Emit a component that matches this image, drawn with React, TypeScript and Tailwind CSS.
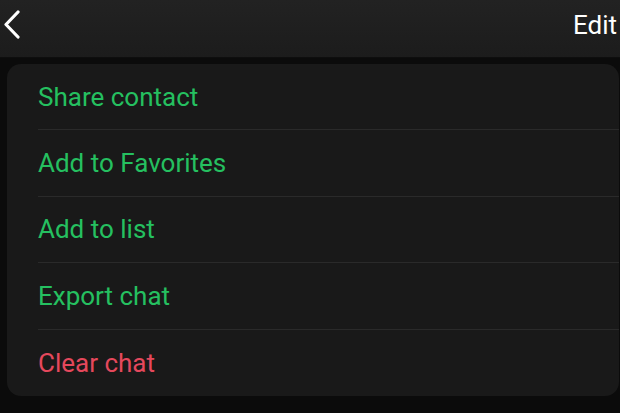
import React from "react";

const items: { label: string; color: string }[] = [
  { label: "Share contact", color: "text-[#25c060]" },
  { label: "Add to Favorites", color: "text-[#25c060]" },
  { label: "Add to list", color: "text-[#25c060]" },
  { label: "Export chat", color: "text-[#25c060]" },
  { label: "Clear chat", color: "text-[#e5485c]" },
];

export default function App() {
  return (
    <div
      className="w-[620px] h-[413px] bg-[#0b0b0b] overflow-hidden flex flex-col"
      style={{ fontFamily: "Roboto, 'Noto Sans', sans-serif" }}
    >
      <div className="h-[58px] shrink-0 bg-gradient-to-b from-[#222222] to-[#1c1c1c] flex items-center justify-between pl-[3px] pr-[3px] border-b border-[#0e0e0e]">
        <svg width="18" height="30" viewBox="0 0 18 30" className="mt-[-8px]">
          <path
            d="M15 2 L3 14.5 L15 27"
            fill="none"
            stroke="#ffffff"
            strokeWidth="3.2"
            strokeLinecap="round"
            strokeLinejoin="round"
          />
        </svg>
        <span className="text-white text-[26px] mt-[-7px]">Edit</span>
      </div>
      <div className="mt-[6px] ml-[7px] mr-[1px] bg-[#191919] rounded-[14px] flex flex-col">
        {items.map((it, i) => (
          <div key={it.label} className="pl-[31px]">
            <div
              className={`h-[66.4px] flex items-center pt-[1px] ${
                i < items.length - 1 ? "border-b border-[#2a2a2a]" : ""
              }`}
            >
              <span className={`${it.color} text-[26px]`}>{it.label}</span>
            </div>
          </div>
        ))}
      </div>
    </div>
  );
}
